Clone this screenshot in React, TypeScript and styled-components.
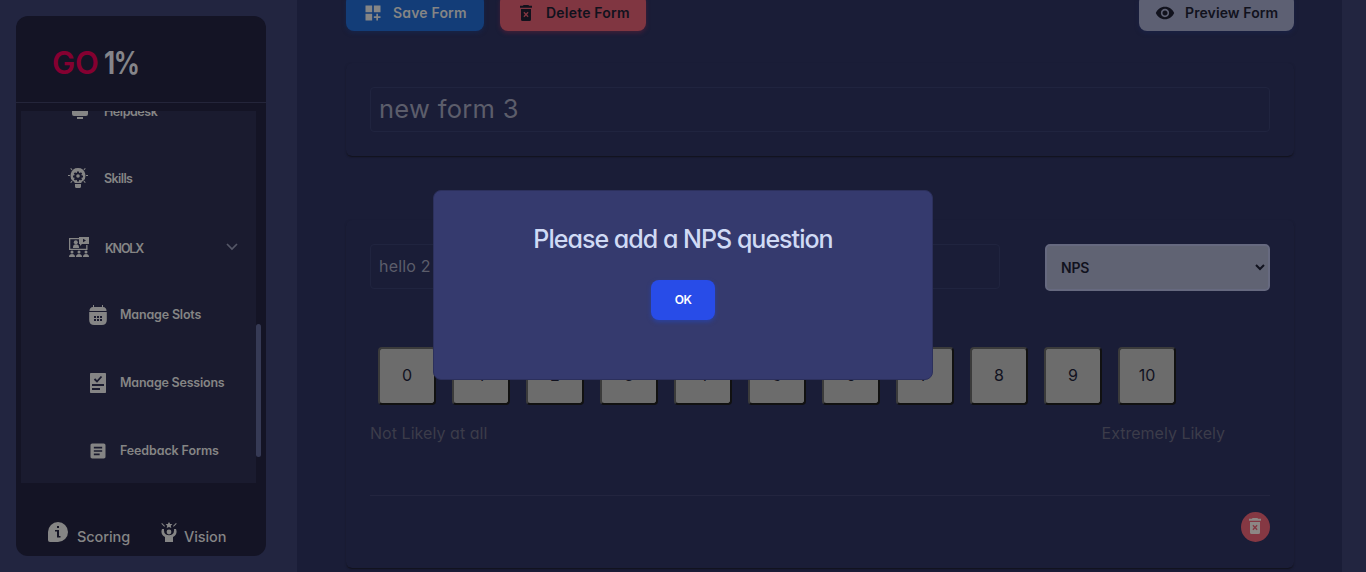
import React from 'react';
import styled, { createGlobalStyle } from 'styled-components';
import { MdDashboardCustomize, MdVisibility, MdArticle } from 'react-icons/md';

const Global = createGlobalStyle`
  * { box-sizing: border-box; }
  body { margin: 0; overflow: hidden; background: #222540; font-family: Inter, "Liberation Sans", sans-serif; font-feature-settings: "cv11", "ss03"; }
  button, input, select { font-family: inherit; font-feature-settings: inherit; }
`;
const Page = styled.div`display: flex; width: 1366px; height: 572px; overflow: hidden; background: #222540;`;
const Side = styled.aside`width: 250px; height: 540px; margin: 16px 31px 0 16px; border-radius: 12px; background: #141425; flex: none; overflow: hidden;`;
const Logo = styled.div`height: 87px; padding: 29px 0 0 36px; border-bottom: 1px solid #24253a; display: flex; gap: 5px; font-size: 31px; line-height: 36px; font-weight: 600; color: #85858a;`;
const T = styled.span<{ $s?: number }>`letter-spacing: ${p => p.$s ?? 0}px; white-space: nowrap;`;
const Go = styled(T)`color: #850031;`;
const Percent = styled(T)`display: inline-block; transform: scaleX(.83); transform-origin: left; font-weight: 700;`;
const Scroller = styled.div`display: flex; height: 372px; margin: 8px 5px 0; overflow: hidden;`;
const Menu = styled.nav`width: 235px; background: #1a1b2f; overflow: hidden; color: #858585; display: flex; flex-direction: column;`;
const Item = styled.div<{ $x: number; $h: number; $gap: number; $up?: number; $lift?: number; $drop?: number }>`
  flex: none; display: flex; align-items: center; height: ${p => p.$h}px; padding-left: ${p => p.$x}px; gap: ${p => p.$gap}px; margin-top: ${p => -(p.$up ?? 0)}px;
  font-size: 12.5px; font-weight: 600; svg { flex: none; }
  ${T} { padding-top: ${p => p.$drop ?? 0}px; padding-bottom: ${p => p.$lift ?? 2}px; }
`;
const Chevron = styled.svg`margin: 0 18px 0 auto;`;
const Track = styled.div`padding-top: 213px;`;
const Thumb = styled.div`width: 5px; height: 133px; border-radius: 3px; background: #363a55;`;
const Foot = styled.footer`display: flex; height: 73px; padding: 39px 0 0 32px; color: #858585; font-size: 14.5px; font-weight: 500; line-height: 30px;`;
const FootItem = styled.div<{ $w: number; $gap: number }>`display: flex; width: ${p => p.$w}px; gap: ${p => p.$gap}px; svg { flex: none; }`;
const Main = styled.main`width: 1045px; height: 572px; padding: 0 48px 0 49px; background: #1a1d37; flex: none;`;
const Bar = styled.div`display: flex; gap: 16px; height: 31px; align-items: flex-end;`;
const Button = styled.button<{ $bg: string; $fg: string; $w: number; $p: number; $gap: number; $sh: string }>`
  display: flex; align-items: center; width: ${p => p.$w}px; height: 37px; flex: none; padding: 1px 0 0 ${p => p.$p}px; gap: ${p => p.$gap}px;
  border: 0; border-radius: 8px; background: ${p => p.$bg}; color: ${p => p.$fg}; box-shadow: 0 2px 4px ${p => p.$sh}; font-size: 14px; font-weight: 600;
  &:last-child { margin-left: auto; }
  ${T} { padding-bottom: 2px; }
`;
const Card = styled.section<{ $t: number; $h: number; $pt: number }>`
  height: ${p => p.$h}px; margin-top: ${p => p.$t}px; padding: ${p => p.$pt}px 24px 0; border-radius: 6px; box-shadow: 0 2px 1px -1px #12131f, 0 1px 2px #171829;
`;
const Field = styled.input<{ $w: number; $size: number; $s: number }>`
  display: block; width: ${p => p.$w}px; height: 45px; padding: 0 8px 2px; border: 1px solid #20243f; border-radius: 4px; background: transparent; color: #5c5d6b; outline: 0; font-size: ${p => p.$size}px; letter-spacing: ${p => p.$s}px;
`;
const Question = styled.div`display: flex; justify-content: space-between; align-items: flex-start;`;
const Select = styled.div`display: flex; align-items: center; justify-content: space-between; width: 225px; height: 47px; padding: 0 3px 0 14px; border: 2px solid #66697f; border-radius: 5px; background: #606373; color: #11121e; font-size: 14px; font-weight: 600;`;
const Scale = styled.div`display: flex; gap: 16px; padding: 56px 0 0 8px;`;
const Score = styled.button`width: 58px; height: 58px; padding: 0 0 2px; border: 2px solid; border-color: #3b3b3b #111 #111 #3b3b3b; border-radius: 4px; background: #6c6c6c; color: #11121f; font-size: 16px;`;
const Ends = styled.div`display: flex; justify-content: space-between; height: 91px; padding: 15px 45px 0 0; border-bottom: 1px solid #23253f; color: #3c3c4a; font-size: 16px; line-height: 26px;`;
const Remove = styled.button`display: flex; align-items: center; justify-content: center; width: 29px; height: 30px; margin: 16px 0 0 auto; padding: 0 1px 2px 0; border: 0; border-radius: 50%; background: #853843; color: #8c8785;`;
const Dialog = styled.div`position: absolute; left: 433px; top: 190px; width: 500px; height: 190px; padding-top: 32px; border: 1px solid #2c305c; border-radius: 8px; background: #353a6e; display: flex; flex-direction: column; align-items: center;`;
const Title = styled.h2`margin: 0; height: 57px; font-size: 25px; font-weight: 500; line-height: 32px; color: #d0daf5;`;
const Ok = styled.button`width: 64px; height: 40px; padding: 0 0 2px; border: 0; border-radius: 8px; background: #284ce8; color: #fff; font-size: 12px; font-weight: 600; box-shadow: 0 2px 4px #2b429f;`;

const Trash = ({ w, h }: { w: number; h: number }) => (
  <svg width={w} height={h} viewBox="0 0 12 16" fill="currentColor"><path fillRule="evenodd" d="M3.6 0h4.8l.7.8H12v2H0v-2h2.9zM1 4h10v10.5Q11 16 9.5 16h-7Q1 16 1 14.500zM3.400 7.800 5 9.500 3.400 11.200l1 1L6 10.600l1.600 1.600 1-1L7 9.500l1.600-1.700-1-1L6 8.400 4.400 6.800z" /></svg>
);
const Monitor = () => <svg width="16" height="20" viewBox="0 0 16 20" fill="currentColor"><path d="M0 1h16v13q0 2-2 2H2q-2 0-2-2zM5 17h6v2H5z" /></svg>;
const Bulb = () => (
  <svg width="20" height="20" viewBox="0 0 20 20" fill="currentColor"><path fillRule="evenodd" d="M10 0a7.500 7.500 0 0 1 3.500 14.100V15h-7v-.9A7.500 7.500 0 0 1 10 0zM9 3.500v1.200l-1 .4-.9-.8-1.300 1.300.8.900-.4 1H5v1.900h1.200l.4 1-.8.9 1.300 1.300.9-.8 1 .4v1.200h2v-1.200l1-.4.900.8 1.300-1.300-.8-.9.4-1H15V7.500h-1.200l-.4-1 .8-.9-1.300-1.300-.9.8-1-.4V3.500z" /><circle cx="10" cy="8" r="1.800" /><path d="M7 16h6v2.500Q13 20 11.500 20h-3Q7 20 7 18.500zM0 7h2v1H0zM18 7h2v1h-2zM3 0l1.500 1.500-.7.7L2.300.7zM17 0l.7.700-1.500 1.500-.7-.7zM3.800 12.800l.7.700L3 15l-.7-.7zM16.200 12.800l1.500 1.500L17 15l-1.500-1.500z" /></svg>
);
const Training = () => (
  <svg width="20" height="20" viewBox="0 0 20 20" fill="currentColor"><path d="M0 1h10v1.300H1.300v9.400h15.900V8h1.300v5H0zM10 0h10v7h-7l-2 2V7h-1z" /><circle cx="6.800" cy="5.200" r="2" /><path d="M4 10.200q0-3 3-3t3 3v.700H4z" /><path d="M14 1.800v3.400L17 3.500z" fill="#1a1b2f" /><circle cx="3" cy="15" r="1.500" /><circle cx="10" cy="15" r="1.500" /><circle cx="17" cy="15" r="1.500" /><path d="M0 20q0-3 3-3t3 3zM7 20q0-3 3-3t3 3zM14 20q0-3 3-3t3 3z" /></svg>
);
const Calendar = () => (
  <svg width="18" height="20" viewBox="0 0 18 20" fill="currentColor"><path d="M4 0h1v2h8V0h1v2q3.500.3 3.500 4H.5Q.500 2.300 4 2z" /><path fillRule="evenodd" d="M.2 7h17.600v8q0 5-5 5H5.200q-5 0-5-5zM5 11v2h2v-2zm3 0v2h2v-2zm3 0v2h2v-2zm-6 3v2h2v-2zm3 0v2h2v-2zm3 0v2h2v-2z" /></svg>
);
const Checklist = () => <svg width="16" height="20" viewBox="0 0 16 20"><rect width="16" height="20" rx=".7" fill="currentColor" /><path d="M4.500 6 7 8.500l4.500-5M2 12h12M2 16h8" fill="none" stroke="#1a1b2f" strokeWidth="1.800" /></svg>;
const Info = () => <svg width="20" height="20" viewBox="0 0 20 20"><path d="M10 0a10 10 0 1 1 0 20H2q-2 0-2-2v-8A10 10 0 0 1 10 0z" fill="currentColor" /><path d="M9 4h2v2H9zM7 8h4v6h1.500v1.500H9V9.500H7z" fill="#141425" /></svg>;
const Person = () => (
  <svg width="16" height="20" viewBox="0 0 16 20" fill="currentColor"><path d="m8 0 1.200 2h2.200L9.800 3.700l.5 2.300L8 5 5.700 6l.5-2.300L4.600 2h2.200z" /><circle cx="8" cy="10" r="2.400" /><path d="M1 7q-2 5 3 8v5h8v-5q5-3 3-8h-2q.5 4-2 5.500-3 1.500-6 0Q2.500 11 3 7zM1 1l3 3-.7.700-3-3zM15 1l-3 3 .7.700 3-3z" /></svg>
);

export default function App() {
  return (
    <><Global /><Page>
      <Side>
        <Logo><Go $s={-.2}>GO</Go><Percent $s={-1.500}>1%</Percent></Logo>
        <Scroller>
          <Menu>
            <Item $x={51} $h={68} $gap={16} $up={35} $lift={0} $drop={2}><Monitor /><T $s={-.45}>Helpdesk</T></Item>
            <Item $x={47} $h={68} $gap={16} $lift={0}><Bulb /><T $s={-.6}>Skills</T></Item>
            <Item $x={48} $h={70} $gap={16} $lift={0} $drop={2}><Training /><T $s={-1.200}>KNOLX</T><Chevron width="12" height="8" viewBox="0 0 12 8" fill="none" stroke="#555767" strokeWidth="1.700"><path d="m1 1 5 5 5-5" /></Chevron></Item>
            <Item $x={68} $h={66} $gap={13}><Calendar /><T $s={-.18}>Manage Slots</T></Item>
            <Item $x={69} $h={70} $gap={14}><Checklist /><T $s={-.22}>Manage Sessions</T></Item>
            <Item $x={67} $h={66} $gap={12}><MdArticle size={20} /><T $s={-.12}>Feedback Forms</T></Item>
          </Menu>
          <Track><Thumb /></Track>
        </Scroller>
        <Foot><FootItem $w={113} $gap={9}><Info /><T $s={-.08}>Scoring</T></FootItem><FootItem $w={80} $gap={7}><Person /><T $s={-.1}>Vision</T></FootItem></Foot>
      </Side>
      <Main>
        <Bar>
          <Button $bg="#133d78" $fg="#858585" $w={138} $p={17} $gap={10} $sh="#172449"><MdDashboardCustomize size={20} /><T $s={.17}>Save Form</T></Button>
          <Button $bg="#803641" $fg="#11121d" $w={146} $p={20} $gap={14} $sh="#421f39"><Trash w={12} h={16} /><T $s={.2}>Delete Form</T></Button>
          <Button $bg="#5d6073" $fg="#11121d" $w={155} $p={16} $gap={10} $sh="#1a2145"><MdVisibility size={20} /><T $s={.1}>Preview Form</T></Button>
        </Bar>
        <Card $t={32} $h={93} $pt={24}><Field $w={900} $size={25.5} $s={.3} readOnly value="new form 3" /></Card>
        <Card $t={64} $h={348} $pt={24}>
          <Question><Field $w={630} $size={16} $s={.2} readOnly value="hello 2" /><Select><T $s={-.2}>NPS</T><svg width="10" height="7" viewBox="0 0 10 7" fill="none" stroke="currentColor" strokeWidth="2"><path d="m1 1 4 4 4-4" /></svg></Select></Question>
          <Scale>{[0, 1, 2, 3, 4, 5, 6, 7, 8, 9, 10].map(n => <Score key={n}>{n}</Score>)}</Scale>
          <Ends><T $s={.05}>Not Likely at all</T><T>Extremely Likely</T></Ends>
          <Remove><Trash w={12} h={16} /></Remove>
        </Card>
      </Main>
    </Page>
    <Dialog role="dialog"><Title><T $s={-.98}>Please add a NPS question</T></Title><Ok><T $s={-.5}>OK</T></Ok></Dialog></>
  );
}
